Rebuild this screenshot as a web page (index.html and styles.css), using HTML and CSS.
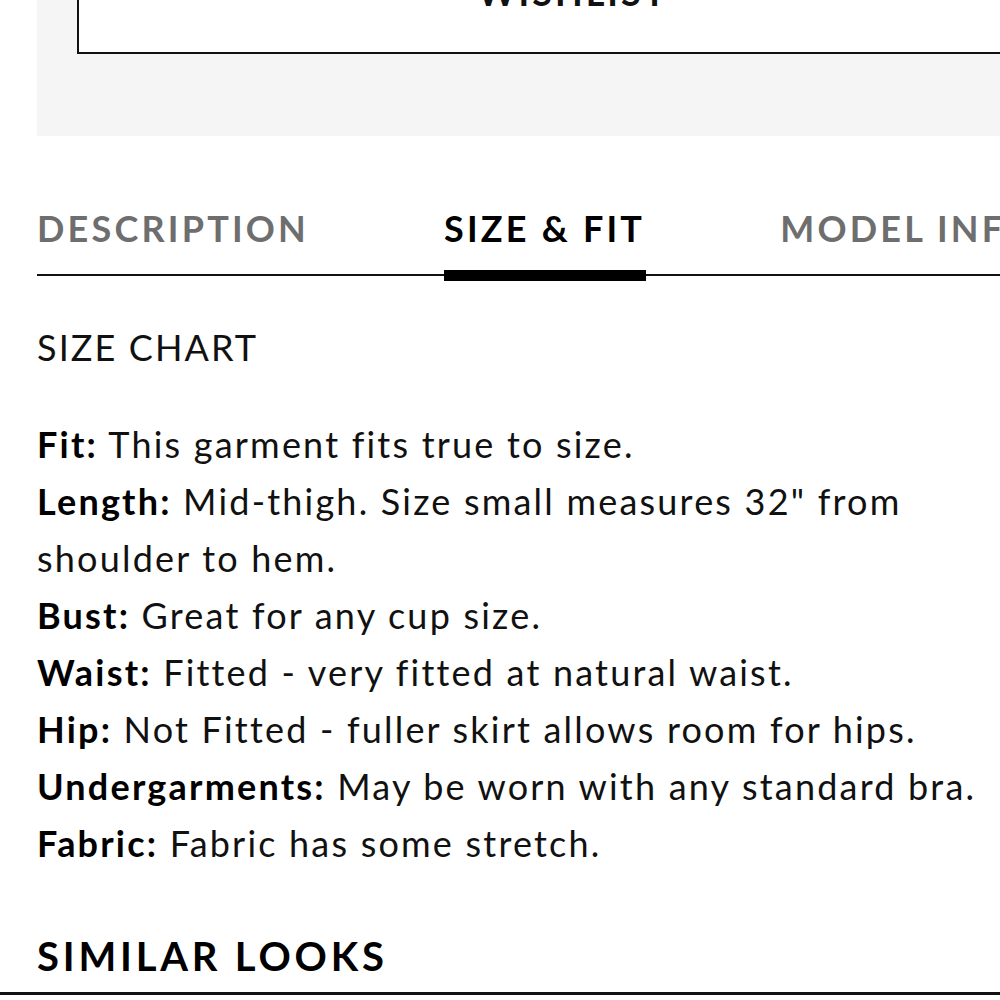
FILE: index.html
```html
<!DOCTYPE html>
<html lang="en">
<head>
<meta charset="utf-8">
<title>Size &amp; Fit</title>
<link rel="stylesheet" href="styles.css">
</head>
<body>
<div class="page">
  <div class="content">
    <div class="cart-panel">
      <button class="wishlist-btn">WISHLIST</button>
    </div>

    <nav class="tabs">
      <span class="tab">DESCRIPTION</span>
      <span class="tab tab-active">SIZE &amp; FIT</span>
      <span class="tab">MODEL INFO</span>
    </nav>

    <section class="tab-panel">
      <p class="chart-link">SIZE CHART</p>
      <ul class="fit-list">
        <li><b>Fit:</b> This garment fits true to size.</li>
        <li><b>Length:</b> Mid-thigh. Size small measures 32" from shoulder to hem.</li>
        <li><b>Bust:</b> Great for any cup size.</li>
        <li><b>Waist:</b> Fitted - very fitted at natural waist.</li>
        <li><b>Hip:</b> Not Fitted - fuller skirt allows room for hips.</li>
        <li><b>Undergarments:</b> May be worn with any standard bra.</li>
        <li><b>Fabric:</b> Fabric has some stretch.</li>
      </ul>
    </section>

    <h2 class="similar-title">SIMILAR LOOKS</h2>
  </div>
  <div class="similar-rule"></div>
</div>
</body>
</html>
```

FILE: styles.css
```css
html, body {
  margin: 0;
  padding: 0;
  background: #fff;
  overflow: hidden;
}

.page {
  width: 1146px;
  font-family: Lato, "Liberation Sans", sans-serif;
  color: #111;
}

.content {
  padding: 0 37px;
}

/* grey purchase panel with the wishlist button */
.cart-panel {
  display: flow-root;
  background: #f5f5f5;
  height: 136px;
  padding: 0 40px;
  box-sizing: border-box;
}

.wishlist-btn {
  display: block;
  width: 100%;
  height: 124px;
  margin-top: -70px;
  box-sizing: border-box;
  background: #fff;
  border: 2px solid #111;
  font: 700 36px/1 Lato, "Liberation Sans", sans-serif;
  letter-spacing: 3px;
  color: #111;
  padding: 0;
}

/* tabs */
.tabs {
  display: flex;
  gap: 135px;
  margin-top: 74px;
  border-bottom: 2px solid #111;
  height: 66px;
  box-sizing: border-box;
}

.tab {
  position: relative;
  font-size: 36px;
  font-weight: 700;
  letter-spacing: 3.2px;
  line-height: 36px;
  color: #6e6e6e;
  white-space: nowrap;
}

.tab-active {
  color: #000;
}

.tab-active::after {
  content: "";
  position: absolute;
  left: 0;
  right: -1px;
  bottom: -7px;
  height: 11px;
  background: #000;
}

/* size & fit panel */
.tab-panel {
  width: 968px;
  margin-top: 43px;
}

.chart-link {
  margin: 0;
  font-size: 36px;
  line-height: 57px;
  letter-spacing: 2.1px;
}

.fit-list {
  list-style: none;
  margin: 40px 0 0;
  padding: 0;
  font-size: 36px;
  line-height: 57px;
  letter-spacing: 2.2px;
}

.fit-list b {
  font-weight: 700;
  color: #000;
}

.similar-title {
  margin: 62px 0 0;
  font-size: 40px;
  line-height: 44px;
  font-weight: 700;
  letter-spacing: 3.8px;
  color: #000;
}

.similar-rule {
  margin-top: 14px;
  height: 3px;
  background: #111;
}
```
